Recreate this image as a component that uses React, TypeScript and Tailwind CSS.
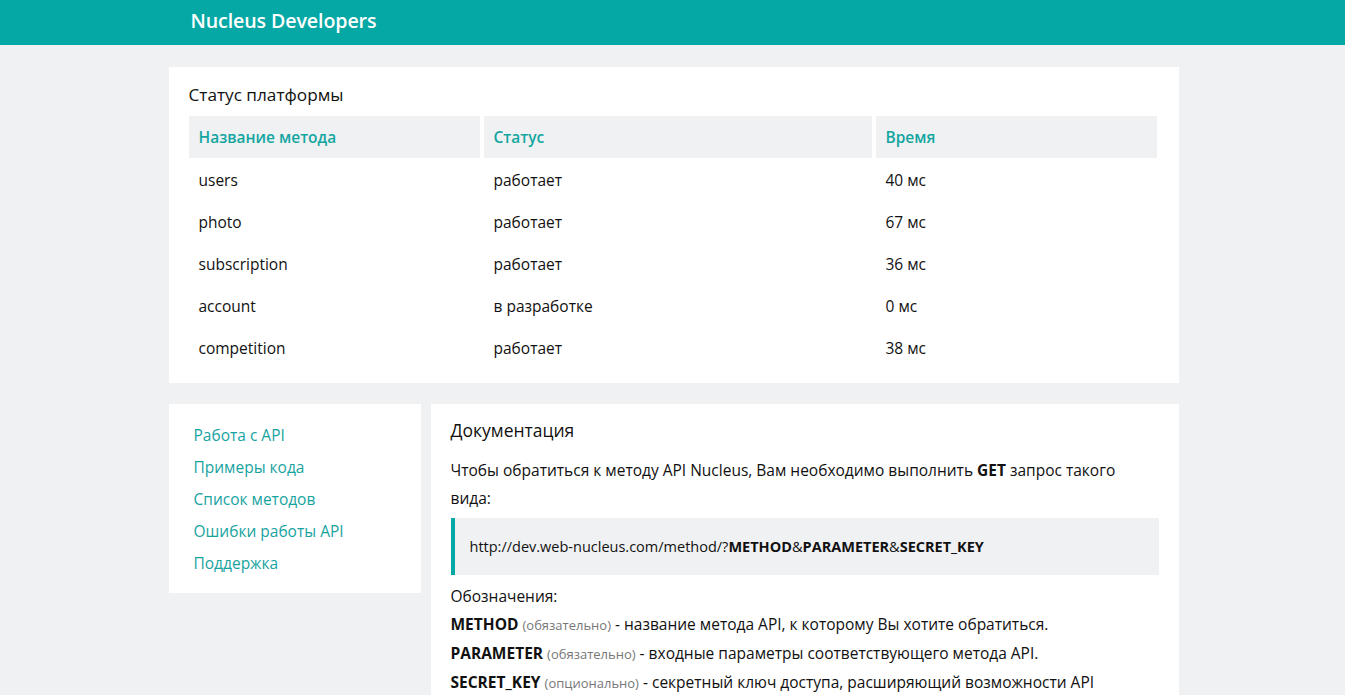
import React from 'react';

const rows = [
  { name: 'users', status: 'работает', time: '40 мс' },
  { name: 'photo', status: 'работает', time: '67 мс' },
  { name: 'subscription', status: 'работает', time: '36 мс' },
  { name: 'account', status: 'в разработке', time: '0 мс' },
  { name: 'competition', status: 'работает', time: '38 мс' },
];

const links = ['Работа с API', 'Примеры кода', 'Список методов', 'Ошибки работы API', 'Поддержка'];

const App: React.FC = () => {
  return (
    <div className="min-h-screen bg-[#f0f1f3] text-[#111] font-['Open_Sans',sans-serif]">
      <header className="h-[45px] bg-[#05a8a4]">
        <div className="w-[1012px] mx-auto pl-[24px] pb-[4px] h-full flex items-center">
          <h1 className="text-white text-[19.6px] font-semibold tracking-[-0.1px]">Nucleus Developers</h1>
        </div>
      </header>

      <main className="w-[1012px] mx-auto pl-[2px] pt-[22px]">
        <section className="bg-white pl-5 pr-[22px] pt-[16px] pb-[15px]">
          <h2 className="text-[17.2px] leading-[24px] mb-[9px]">Статус платформы</h2>
          <div className="grid grid-cols-[291px_388px_281px] gap-x-[4px] text-[15.5px]">
            <div className="h-[42px] bg-[#f0f1f3] pl-[10px] pt-[2px] flex items-center font-semibold text-[#13a6a1]">Название метода</div>
            <div className="h-[42px] bg-[#f0f1f3] pl-[10px] pt-[2px] flex items-center font-semibold text-[#13a6a1]">Статус</div>
            <div className="h-[42px] bg-[#f0f1f3] pl-[10px] pt-[2px] flex items-center font-semibold text-[#13a6a1]">Время</div>
            {rows.map((r) => (
              <React.Fragment key={r.name}>
                <div className="h-[42px] pl-[10px] pt-[4px] flex items-center">{r.name}</div>
                <div className="h-[42px] pl-[10px] pt-[4px] flex items-center">{r.status}</div>
                <div className="h-[42px] pl-[10px] pt-[4px] flex items-center">{r.time}</div>
              </React.Fragment>
            ))}
          </div>
        </section>

        <div className="flex gap-[10px] mt-[21px] items-start">
          <nav className="w-[252px] bg-white pl-[25px] pt-[15px] pb-[14px] flex flex-col">
            {links.map((l) => (
              <a key={l} href="#" className="text-[#17a39f] text-[15.5px] leading-[32px]">
                {l}
              </a>
            ))}
          </nav>

          <section className="flex-1 bg-white pl-5 pr-5 pt-[14px] pb-4 text-[15.5px] leading-[28px]">
            <h2 className="text-[17.5px] leading-[24px] mb-[14px]">Документация</h2>
            <p>
              Чтобы обратиться к методу API Nucleus, Вам необходимо выполнить <b>GET</b> запрос такого вида:
            </p>
            <div className="mt-[6px] mb-[7px] h-[57px] bg-[#f0f1f3] border-l-4 border-[#05a8a4] pl-[15px] flex items-center text-[14.5px]">
              <span>
                http://dev.web-nucleus.com/method/?<b>METHOD</b>&amp;<b>PARAMETER</b>&amp;<b>SECRET_KEY</b>
              </span>
            </div>
            <p>Обозначения:</p>
            <p>
              <b>METHOD</b> <span className="text-[13px] text-[#777]">(обязательно)</span> - название метода API, к которому Вы хотите обратиться.
            </p>
            <p>
              <b>PARAMETER</b> <span className="text-[13px] text-[#777]">(обязательно)</span> - входные параметры соответствующего метода API.
            </p>
            <p>
              <b>SECRET_KEY</b> <span className="text-[13px] text-[#777]">(опционально)</span> - секретный ключ доступа, расширяющий возможности API
            </p>
          </section>
        </div>
      </main>
    </div>
  );
};

export default App;
